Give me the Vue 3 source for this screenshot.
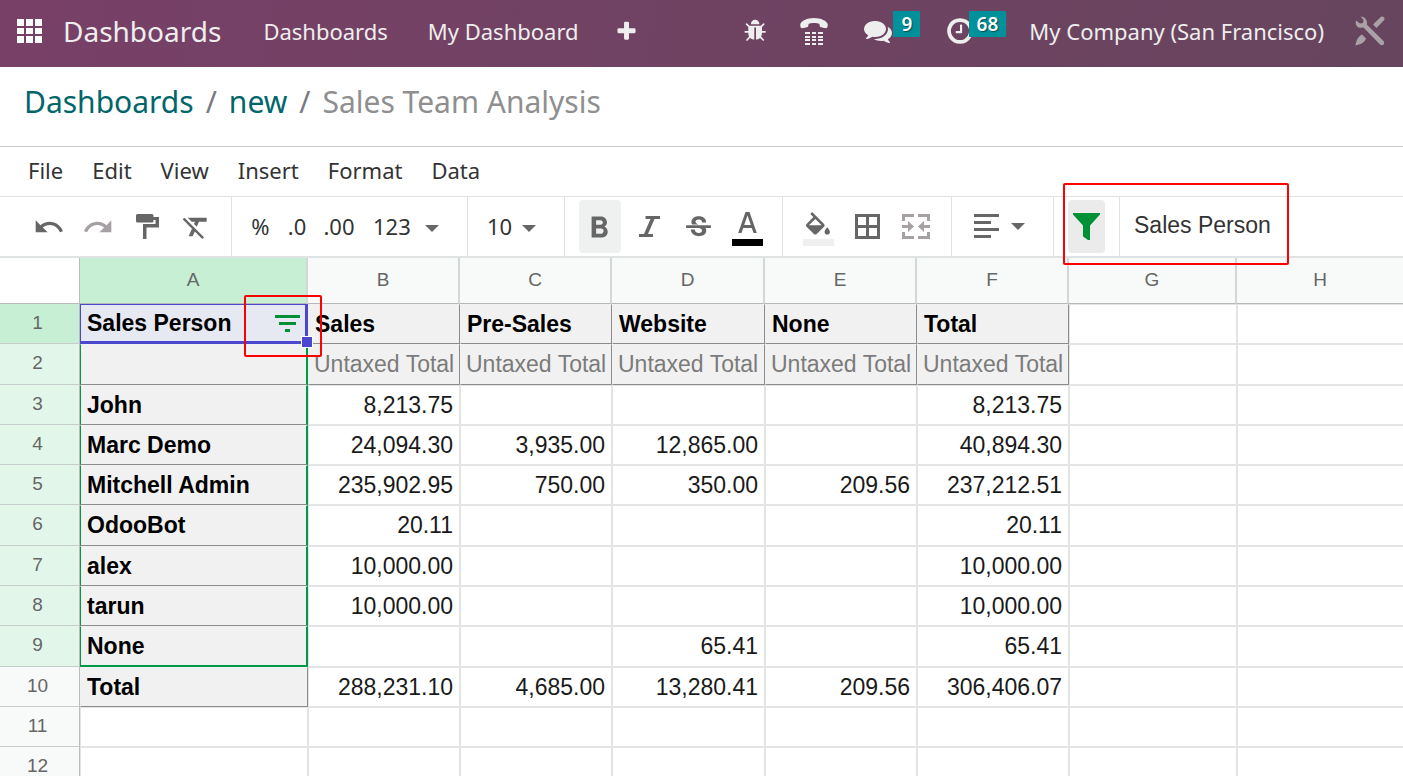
<script setup>
import { ref } from 'vue'

const composer = ref('Sales Person')
const fontSize = ref('10')
const menus = ['File', 'Edit', 'View', 'Insert', 'Format', 'Data']
const columns = ['A', 'B', 'C', 'D', 'E', 'F', 'G', 'H']

const rows = [
  ['Sales Person', 'Sales', 'Pre-Sales', 'Website', 'None', 'Total'],
  ['', 'Untaxed Total', 'Untaxed Total', 'Untaxed Total', 'Untaxed Total', 'Untaxed Total'],
  ['John', '8,213.75', '', '', '', '8,213.75'],
  ['Marc Demo', '24,094.30', '3,935.00', '12,865.00', '', '40,894.30'],
  ['Mitchell Admin', '235,902.95', '750.00', '350.00', '209.56', '237,212.51'],
  ['OdooBot', '20.11', '', '', '', '20.11'],
  ['alex', '10,000.00', '', '', '', '10,000.00'],
  ['tarun', '10,000.00', '', '', '', '10,000.00'],
  ['None', '', '', '65.41', '', '65.41'],
  ['Total', '288,231.10', '4,685.00', '13,280.41', '209.56', '306,406.07'],
  [],
  [],
]

function cellClass(r, c) {
  return {
    boxed: (c === 0 && r < 10) || (r < 2 && c < 6),
    bold: c === 0 || r === 0,
    muted: r === 1,
    number: r > 1 && c > 0,
    filtered: c === 0 && r > 0 && r < 9,
    'filter-end': c === 0 && r === 8,
    selected: c === 0 && r === 0,
  }
}
</script>

<template>
  <div class="app">
    <header class="navbar">
      <button class="nav-btn apps" aria-label="Apps">
        <svg width="25" height="24" viewBox="0 0 25 24"><path d="M0 0h7v7H0zM9 0h7v7H9zM18 0h7v7h-7zM0 9h7v6H0zM9 9h7v6H9zM18 9h7v6h-7zM0 17h7v7H0zM9 17h7v7H9zM18 17h7v7h-7z" /></svg>
      </button>
      <a class="brand" href="#">Dashboards</a>
      <nav class="nav-links">
        <a href="#">Dashboards</a>
        <a href="#">My Dashboard</a>
      </nav>
      <button class="nav-btn" aria-label="Add">
        <svg width="23" height="23" viewBox="0 0 1792 1792"><path d="M1600 736v192q0 40-28 68t-68 28h-416v416q0 40-28 68t-68 28h-192q-40 0-68-28t-28-68v-416h-416q-40 0-68-28t-28-68v-192q0-40 28-68t68-28h416v-416q0-40 28-68t68-28h192q40 0 68 28t28 68v416h416q40 0 68 28t28 68z" /></svg>
      </button>
      <div class="systray">
        <button class="nav-btn bug" aria-label="Debug">
          <svg width="24" height="24" viewBox="0 0 1792 1792"><path d="M1632 960q0 26-19 45t-45 19h-224q0 171-67 290l208 209q19 19 19 45t-19 45q-18 19-45 19t-45-19l-198-197q-5 5-15 13t-42 28.5-65 36.5-82 29-97 13v-896h-128v896q-51 0-101.5-13.5t-87-33-66-39-43.5-32.5l-15-14-183 207q-20 21-48 21-24 0-43-16-19-18-20.5-44.5t15.5-46.5l202-227q-58-114-58-274h-224q-26 0-45-19t-19-45 19-45 45-19h224v-294l-173-173q-19-19-19-45t19-45 45-19 45 19l173 173h844l173-173q19-19 45-19t45 19 19 45-19 45l-173 173v294h224q26 0 45 19t19 45zm-480-576h-640q0-133 93.5-226.5t226.5-93.5 226.5 93.5 93.5 226.5z" /></svg>
        </button>
        <button class="nav-btn phone" aria-label="Phone">
          <svg width="28" height="28" viewBox="0 0 28 28">
            <path d="M14 1C7 1 1 4 .3 7.200c-.2 1 .2 3.600 1 3.900.8.300 5.500-.6 6.400-1.100.9-.5.300-2.700 1.200-3.300C10.500 5.700 17.500 5.700 19.100 6.700c.9.600.3 2.800 1.200 3.300.9.500 5.600 1.400 6.400 1.100.8-.3 1.200-2.900 1-3.900C27 4 21 1 14 1z" />
            <path d="M5 15h5v2H5zM12 15h4v2h-4zM18 15h5v2h-5zM5 19h5v2H5zM12 19h4v2h-4zM18 19h5v2h-5zM5 22h5v2H5zM12 22h4v2h-4zM18 22h5v2h-5zM5 26h5v2H5zM12 26h4v2h-4zM18 26h5v2h-5z" />
          </svg>
        </button>
        <button class="nav-btn chats" aria-label="Messages">
          <svg width="28" height="28" viewBox="0 0 1792 1792"><path d="M1408 768q0 139-94 257t-256.500 186.500-353.500 68.500q-86 0-176-16-124 88-278 128-36 9-86 16h-3q-11 0-20.500-8t-11.500-21q-1-3-1-6.500t.5-6.500 2-6l2.500-5 3.500-5.500 4-5 4.500-5 4-4.500q5-6 23-25t26-29.500 22.500-29 25-38.500 20.500-44q-124-72-195-177t-71-224q0-139 94-257t256.500-186.500 353.500-68.500 353.500 68.500 256.500 186.500 94 257zm384 256q0 120-71 224.500t-195 176.500q10 24 20.500 44t25 38.500 22.500 29 26 29.500 23 25q1 1 4 4.500t4.500 5 4 5 3.500 5.500l2.500 5 2 6 .5 6.500-1 6.500q-3 14-13 22t-22 7q-50-7-86-16-154-40-278-128-90 16-176 16-271 0-472-132 58 4 88 4 161 0 309-45t264-129q125-92 192-212t67-254q0-77-23-152 129 71 204 178t75 230z" /></svg>
          <span class="badge">9</span>
        </button>
        <button class="nav-btn clock" aria-label="Activities">
          <svg width="30" height="30" viewBox="0 0 1792 1792"><path d="M1024 544v448q0 14-9 23t-23 9h-320q-14 0-23-9t-9-23v-64q0-14 9-23t23-9h224v-352q0-14 9-23t23-9h64q14 0 23 9t9 23zm416 352q0-148-73-273t-198-198-273-73-273 73-198 198-73 273 73 273 198 198 273 73 273-73 198-198 73-273zm224 0q0 209-103 385.500t-279.500 279.500-385.500 103-385.500-103-279.500-279.500-103-385.500 103-385.500 279.500-279.500 385.500-103 385.500 103 279.500 279.500 103 385.500z" /></svg>
          <span class="badge">68</span>
        </button>
        <button class="nav-btn company">My Company (San Francisco)</button>
        <button class="nav-btn tools" aria-label="Developer tools">
          <svg width="30" height="30" viewBox="0 0 30 30">
            <path d="M5.500.500L8.500 4l-.5 3-3 .5L1 4.500C-.2 8 2 12 6 11.800l2.500-.3L25 28.500c2.500 2 5.500-.5 3.500-3.500L11.800 8.500c1-4-1.800-8-6.300-8z" />
            <path d="M18 8.500L26 .8c2-1.200 4.500 1 3.200 3.200L21.500 12zM7 18.500l4 4c-1.500 4-5.500 6-10.500 7C1 25 3 20.500 7 18.500z" />
          </svg>
        </button>
      </div>
    </header>

    <nav class="breadcrumb" aria-label="Breadcrumb">
      <a href="#">Dashboards</a><span class="slash">/</span><a href="#">new</a><span class="slash">/</span><span class="current">Sales Team Analysis</span>
    </nav>

    <div class="menubar">
      <button v-for="m in menus" :key="m">{{ m }}</button>
    </div>

    <div class="toolbar">
      <div class="group first">
        <button class="tool" aria-label="Undo"><svg width="32" height="32" viewBox="0 0 24 24"><path d="M12.500 8c-2.650 0-5.050.99-6.900 2.600L2 7v9h9l-3.620-3.620c1.390-1.160 3.160-1.880 5.120-1.880 3.540 0 6.550 2.310 7.600 5.500l2.370-.78C21.080 11.030 17.150 8 12.500 8z" /></svg></button>
        <button class="tool off" aria-label="Redo"><svg width="32" height="32" viewBox="0 0 24 24"><path d="M18.400 10.600C16.550 8.990 14.150 8 11.500 8c-4.650 0-8.580 3.030-9.960 7.220L3.900 16c1.050-3.190 4.050-5.500 7.600-5.500 1.950 0 3.730.72 5.120 1.880L13 16h9V7l-3.600 3.600z" /></svg></button>
        <button class="tool" aria-label="Paint format"><svg width="23" height="25" viewBox="0 0 23 25"><path d="M1.500 0h14.500a1.500 1.500 0 0 1 1.500 1.500V3H23v10.500H10.500V25H7V10h12.500V6h-2v1a1.500 1.500 0 0 1-1.500 1.500H1.500A1.500 1.500 0 0 1 0 7V1.500A1.500 1.500 0 0 1 1.500 0z" /></svg></button>
        <button class="tool" aria-label="Clear format"><svg width="32" height="32" viewBox="0 0 24 24"><path d="M3.270 5L2 6.270l6.970 6.970L6.500 19h3l1.570-3.660L16.730 21 18 19.730 3.550 5.270 3.270 5zM6 5v.18L8.820 8h2.400l-.72 1.680 2.100 2.100L14.210 8H20V5H6z" /></svg></button>
      </div>
      <div class="group formats">
        <button class="text-tool percent">%</button>
        <button class="text-tool less">.0</button>
        <button class="text-tool more">.00</button>
        <button class="text-tool with-caret">123<svg class="caret" width="14" height="7" viewBox="0 0 14 7"><path d="M0 0h14L7 7z" /></svg></button>
      </div>
      <div class="group size">
        <label class="text-tool with-caret">
          <select v-model="fontSize" aria-label="Font size"><option>10</option><option>12</option><option>14</option></select>
          <svg class="caret" width="14" height="7" viewBox="0 0 14 7"><path d="M0 0h14L7 7z" /></svg>
        </label>
      </div>
      <div class="group">
        <button class="tool active" aria-label="Bold"><svg width="36" height="36" viewBox="0 0 24 24"><path d="M15 11.790c.97-.67 1.650-1.770 1.650-2.790 0-2.260-1.750-4-4-4H6.400v14h7.040c2.090 0 3.710-1.700 3.710-3.790 0-1.520-.86-2.820-2.150-3.420zM9.400 7.500h3c.83 0 1.500.67 1.500 1.500s-.67 1.500-1.500 1.500h-3v-3zm3.500 9H9.400V13h3.500c.83 0 1.500.67 1.500 1.500s-.67 2-1.500 2z" /></svg></button>
        <button class="tool" aria-label="Italic"><svg width="21" height="21" viewBox="0 0 21 21"><path d="M6.500 0H21v3h-5.500L9 18h5v3H0v-3h5L11.500 3h-5z" /></svg></button>
        <button class="tool" aria-label="Strikethrough"><svg width="33" height="33" viewBox="0 1 24 22"><path d="M6.850 7.080C6.850 4.370 9.450 3 12.240 3c1.640 0 3 .49 3.900 1.280.77.65 1.460 1.730 1.460 3.240h-3.010c0-.31-.05-.59-.15-.85-.29-.86-1.200-1.280-2.250-1.280-1.860 0-2.340 1.020-2.340 1.700 0 .48.25.88.74 1.210.38.25.77.48 1.410.7H7.390c-.21-.34-.54-.89-.54-1.920zM21 11.500v-2H3v2h9.620c1.150.45 1.960.75 1.960 1.970 0 1-.81 1.670-2.280 1.670-1.540 0-2.930-.54-2.930-2.510H6.400c0 .55.080 1.130.24 1.580.81 2.290 3.290 3.300 5.670 3.300 2.270 0 5.300-.89 5.300-4.050 0-.3-.01-1.160-.48-1.940H21z" transform="translate(0 1.500)" /></svg></button>
        <button class="tool stacked" aria-label="Text color"><svg width="31" height="34" viewBox="0 0 31 34"><path d="M13.500 0h4l7.300 21h-3.300l-1.700-5h-8.600l-1.700 5H6.200zM12.200 13h6.600L15.500 3.500z" /><path class="ink" d="M0 27h31v7H0z" /></svg></button>
      </div>
      <div class="group">
        <button class="tool stacked" aria-label="Fill color"><svg width="31" height="34" viewBox="0 0 31 34"><path transform="translate(-1 0) scale(1.330)" d="M16.560 8.940L7.620 0 6.210 1.410l2.380 2.380-5.150 5.150c-.59.59-.59 1.540 0 2.120l5.500 5.500c.29.29.68.44 1.060.44s.77-.15 1.060-.44l5.500-5.500c.59-.58.59-1.530 0-2.120zM5.210 10L10 5.210 14.790 10H5.210zM19 11.500s-2 2.170-2 3.500c0 1.100.9 2 2 2s2-.9 2-2c0-1.330-2-3.500-2-3.500z" /><path class="paper" d="M0 27h31v7H0z" /></svg></button>
        <button class="tool" aria-label="Borders"><svg width="25" height="25" viewBox="0 0 25 25"><path fill-rule="evenodd" d="M0 0h25v25H0zM3 3v8h8V3zM14 3v8h8V3zM3 14v8h8v-8zM14 14v8h8v-8z" /></svg></button>
        <button class="tool off" aria-label="Merge cells"><svg width="28" height="25" viewBox="0 0 28 25"><path d="M0 0h12v3H3v4H0zM16 0h12v7h-3V3h-9zM0 18h3v4h9v3H0zM25 18h3v7H16v-3h9zM0 11h6V7l6 5.500L6 18v-4H0zM28 11h-6V7l-6 5.500 6 5.500v-4h6z" /></svg></button>
      </div>
      <div class="group align">
        <button class="align-btn" aria-label="Horizontal align">
          <svg width="25" height="25" viewBox="0 0 25 25"><path d="M0 0h25v3H0zM0 7h17v3H0zM0 14h25v3H0zM0 21h17v3H0z" /></svg>
          <svg class="caret" width="14" height="7" viewBox="0 0 14 7"><path d="M0 0h14L7 7z" /></svg>
        </button>
      </div>
      <div class="group filter">
        <button class="tool active" aria-label="Filter"><svg width="27" height="27" viewBox="0 0 27 27"><path class="green" d="M0 0h27v1.500L17 12.500V27h-2l-5-3.500v-11L0 1.500z" /></svg></button>
        <span class="marker toolbar-marker"></span>
      </div>
      <input v-model="composer" class="composer" type="text" aria-label="Cell content">
    </div>

    <div class="sheet">
      <table>
        <colgroup>
          <col class="w-index"><col class="w-a"><col class="w-b"><col class="w-b"><col class="w-d"><col class="w-b"><col class="w-b"><col class="w-g"><col>
        </colgroup>
        <thead>
          <tr>
            <td class="corner"></td>
            <th v-for="(c, i) in columns" :key="c" scope="col" :class="{ current: i === 0 }">{{ c }}</th>
          </tr>
        </thead>
        <tbody>
          <tr v-for="(row, r) in rows" :key="r">
            <th scope="row" :class="{ current: r === 0, ranged: r > 0 && r < 9 }">{{ r + 1 }}</th>
            <td v-for="(c, i) in columns" :key="c" :class="cellClass(r, i)">
              {{ row[i] }}
              <template v-if="r === 0 && i === 0">
                <button class="cell-filter" aria-label="Filter column"><svg width="25" height="17" viewBox="0 0 25 17"><path class="green" d="M0 0h25v3H0zM4 7h17v3H4zM10 14h5v3h-5z" /></svg></button>
                <span class="handle"></span>
                <span class="marker cell-marker"></span>
              </template>
            </td>
          </tr>
        </tbody>
      </table>
    </div>
  </div>
</template>

<style>
body {
  margin: 0;
  background: #fff;
}
</style>

<style scoped>
.app {
  display: flex;
  flex-direction: column;
  height: 100vh;
  overflow: hidden;
  font-family: "Noto Sans", "Open Sans", sans-serif;
  color: #333;
}
.app * {
  box-sizing: border-box;
}
button,
input,
select {
  margin: 0;
  padding: 0;
  border: 0;
  background: none;
  color: inherit;
  font: inherit;
}
a {
  text-decoration: none;
}
svg {
  display: block;
  flex: none;
  fill: #666;
}

.navbar {
  display: flex;
  flex: none;
  align-items: center;
  height: 67px;
  padding: 0 18px 5px 17px;
  background: linear-gradient(100deg, #784067, #67455e);
  color: #eee;
  font-size: 22px;
  white-space: nowrap;
}
.navbar a {
  color: #eee;
}
.navbar svg {
  fill: #eee;
}
.nav-btn {
  display: flex;
  align-items: center;
  position: relative;
  height: 60px;
}
.navbar .apps svg {
  fill: #fff;
}
.brand {
  margin-left: 21px;
  font-size: 28px;
}
.nav-links {
  display: flex;
  gap: 40px;
  margin: 0 36px 0 42px;
}
.systray {
  display: flex;
  align-items: center;
  margin-left: auto;
}
.bug {
  margin-right: 32px;
}
.phone {
  margin-right: 36px;
}
.chats {
  width: 56px;
  margin-right: 25px;
}
.clock {
  width: 61px;
  margin-right: 23px;
}
.badge {
  position: absolute;
  top: 10px;
  right: 0;
  padding: 0 8px;
  background: #00919b;
  color: #fff;
  font-size: 19px;
  font-weight: 600;
  line-height: 26px;
  text-shadow: 1px 1px 1px #004a50;
}
.company {
  margin-right: 31px;
}
.navbar .tools svg {
  fill: #a9a1a6;
}

.breadcrumb {
  display: flex;
  flex: none;
  align-items: center;
  height: 80px;
  padding: 0 24px 10px;
  border-bottom: 1px solid #c9cbcb;
  font-size: 30px;
}
.breadcrumb a {
  color: #01666b;
}
.slash {
  margin: 0 12px;
  color: #777a80;
}
.current {
  color: #8f8f8f;
}

.menubar {
  display: flex;
  flex: none;
  gap: 29px;
  height: 50px;
  padding: 0 28px 4px;
  border-bottom: 1px solid #e0e2e4;
  font-size: 22px;
}

.toolbar {
  display: flex;
  flex: none;
  height: 61px;
  border-bottom: 2px solid #e0e3e3;
}
.group {
  display: flex;
  flex: none;
  align-items: center;
  gap: 7px;
  position: relative;
  padding: 0 14px;
  border-right: 1px solid #e0e2e6;
}
.first {
  padding-left: 28px;
}
.tool {
  display: flex;
  align-items: center;
  justify-content: center;
  width: 42px;
  height: 53px;
  border-radius: 4px;
}
.tool.active {
  background: #eff1f1;
}
.off svg {
  fill: #a6a0a4;
}
.stacked {
  align-items: flex-end;
  padding-bottom: 7px;
}
.ink {
  fill: #000;
}
.paper {
  fill: #f0f0f0;
}
.green {
  fill: #009036;
}
.formats {
  gap: 0;
  width: 236px;
  padding: 0 11px;
}
.text-tool {
  height: 53px;
  padding-bottom: 2px;
  font-size: 22px;
  text-align: center;
}
.text-tool .caret {
  margin-top: 6px;
}
.percent {
  width: 35px;
}
.less {
  width: 38px;
}
.more {
  width: 46px;
}
.with-caret,
.align-btn {
  display: flex;
  align-items: center;
  gap: 14px;
}
.formats .with-caret {
  margin-left: 11px;
}
.size {
  width: 97px;
  padding-left: 19px;
}
.size .with-caret {
  gap: 9px;
}
.size select {
  appearance: none;
  width: 26px;
}
.align {
  width: 102px;
  padding-left: 22px;
}
.align-btn {
  gap: 12px;
}
.filter {
  width: 66px;
}
.filter .tool {
  width: 37px;
  background: #ebebeb;
}
.marker {
  position: absolute;
  z-index: 3;
  border: 2px solid #f00;
  border-radius: 2px;
  pointer-events: none;
}
.toolbar-marker {
  top: -14px;
  left: 9px;
  width: 226px;
  height: 82px;
}
.composer {
  flex: 1;
  min-width: 0;
  padding: 0 14px 2px;
  font-family: "Liberation Sans", Arial, sans-serif;
  font-size: 23px;
}

.sheet {
  flex: 1;
  min-height: 0;
  overflow: hidden;
}
table {
  width: 100%;
  table-layout: fixed;
  border-collapse: separate;
  border-spacing: 0;
  font-family: "Liberation Sans", Arial, sans-serif;
  font-size: 23px;
  color: #1a1a1a;
}
.w-index {
  width: 80px;
}
.w-a {
  width: 228px;
}
.w-b {
  width: 152px;
}
.w-d {
  width: 153px;
}
.w-g {
  width: 168px;
}
tr {
  height: 40px;
}
thead tr {
  height: 46px;
}
tbody tr:nth-child(2),
tbody tr:nth-child(6),
tbody tr:nth-child(9) {
  height: 41px;
}
th {
  padding: 0 0 2px;
  background: #f8faf9;
  color: #666;
  font-size: 19px;
  font-weight: 400;
}
thead th {
  border-right: 2px solid #d4d7d7;
  border-bottom: 1px solid #b5b8b8;
}
tbody th {
  padding-right: 4px;
  border-right: 1px solid #b9bcbc;
  border-bottom: 1px solid #c8cbcb;
}
th.current {
  background: #c6efd4;
  color: #666;
}
th.ranged {
  background: #e2f7ea;
}
td {
  position: relative;
  padding: 0 6px 1px;
  border: 1px solid #e3e4e4;
  line-height: 26px;
  white-space: nowrap;
}
th:last-child,
td:last-child {
  border-right: 0;
}
.corner {
  border-width: 0 1px 1px 0;
  border-color: #b9bcbc;
}
.boxed {
  border-color: #f1f1f1 #8c8c8c #8c8c8c #f1f1f1;
  background: #f1f1f1;
}
.bold {
  color: #000;
  font-weight: 700;
}
.muted {
  padding-left: 5px;
  color: #7b7b7b;
}
.number {
  padding-right: 6px;
  text-align: right;
}
.filtered {
  border-left-color: #009a46;
  border-right: 2px solid #009a46;
}
.filter-end {
  border-bottom: 2px solid #009a46;
}
.selected {
  padding-bottom: 0;
  border: solid #4b48cf;
  border-width: 1px 3px 3px 1px;
  background: #e6e8f2;
}
.cell-filter {
  position: absolute;
  top: 10px;
  right: 5px;
}
.handle {
  position: absolute;
  z-index: 2;
  right: -8px;
  bottom: -7px;
  width: 12px;
  height: 12px;
  border: 1px solid #fff;
  background: #4b48cf;
}
.cell-marker {
  top: -10px;
  right: -17px;
  width: 78px;
  height: 62px;
}
</style>
